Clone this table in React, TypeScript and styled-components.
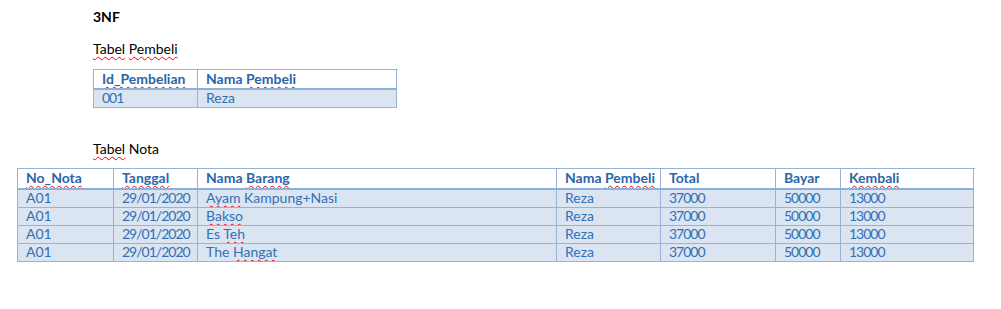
import React from 'react';
import styled, {createGlobalStyle} from "styled-components";

const GlobalStyle = createGlobalStyle`
  html, body {
    margin: 0;
    padding: 0;
    background: #ffffff;
  }
  body {
    font-family: Lato, "Open Sans", sans-serif;
    font-size: 14px;
    color: #000000;
  }
`

const StyledPage = styled.div`
  width: 1001px;
  height: 309px;
  padding: 8px 0 0 17px;
  box-sizing: border-box;
`
const StyledIndent = styled.div`
  margin-left: 76px;
`
const StyledTitle = styled.div`
  font-weight: bold;
  line-height: 18px;
  margin-bottom: 14px;
`
const StyledCaption = styled.div<{ $gap: number, $top?: number }>`
  line-height: 18px;
  margin-top: ${p => p.$top || 0}px;
  margin-bottom: ${p => p.$gap}px;
`
const StyledTable = styled.div<{ $cols: number[], $width: number }>`
  display: grid;
  grid-template-columns: ${p => p.$cols.map(c => `${c}px`).join(" ")};
  width: ${p => p.$width}px;
  border-left: 1px solid #95b3d7;
  border-top: 1px solid #95b3d7;
`
const StyledCell = styled.div<{ $head?: boolean, $height: number }>`
  box-sizing: border-box;
  height: ${p => p.$height}px;
  padding: 0 6px 0 8px;
  line-height: ${p => p.$head ? 18 : 16}px;
  white-space: nowrap;
  overflow: hidden;
  font-weight: ${p => p.$head ? "bold" : "normal"};
  color: ${p => p.$head ? "#2b66a8" : "#3270b5"};
  background: ${p => p.$head ? "#ffffff" : "#dbe5f1"};
  border-right: 1px solid #95b3d7;
  border-bottom: ${p => p.$head ? "2px solid #8db0da" : "1px solid #95b3d7"};
`
const Typo = styled.span`
  text-decoration: underline wavy #ff0000;
  text-decoration-thickness: 1.2px;
  text-underline-offset: 2px;
  text-decoration-skip-ink: none;
`
// Lato digits run wider than the Calibri ones in the picture
const Num = styled.span`
  letter-spacing: -1px;
`

const FLAGGED = ["Tabel", "Pembeli", "Id_Pembelian", "No_Nota", "Tanggal", "Barang", "Kembali", "Ayam", "Bakso", "Teh", "Hangat"]

// wraps words Word flags as misspelt
const spell = (text: string) => {
    if (/^[\d/]+$/.test(text)) return <Num>{text}</Num>
    return text.split(/(\s+|\+)/).map((w, i) =>
        FLAGGED.includes(w) ? <Typo key={i}>{w}</Typo> : <React.Fragment key={i}>{w}</React.Fragment>)
}

const DataTable = (
    {
        cols,
        head,
        rows,
        headHeight
    }: {
        cols: number[],
        head: string[],
        rows: string[][],
        headHeight: number
    }) => {
    const width = cols.reduce((a, b) => a + b, 0) + 1
    return (
        <StyledTable $cols={cols} $width={width}>
            {head.map((h, i) => <StyledCell key={"h" + i} $head $height={headHeight}>{spell(h)}</StyledCell>)}
            {rows.map((row, r) => row.map((c, i) =>
                <StyledCell key={r + "-" + i} $height={18}>{spell(c)}</StyledCell>))}
        </StyledTable>
    )
}

const notaRows = [
    ["A01", "29/01/2020", "Ayam Kampung+Nasi", "Reza", "37000", "50000", "13000"],
    ["A01", "29/01/2020", "Bakso", "Reza", "37000", "50000", "13000"],
    ["A01", "29/01/2020", "Es Teh", "Reza", "37000", "50000", "13000"],
    ["A01", "29/01/2020", "The Hangat", "Reza", "37000", "50000", "13000"],
]

function App() {
    return (
        <StyledPage>
            <GlobalStyle/>
            <StyledIndent>
                <StyledTitle>3NF</StyledTitle>
                <StyledCaption $gap={11}>{spell("Tabel Pembeli")}</StyledCaption>
                <DataTable
                    cols={[104, 199]}
                    head={["Id_Pembelian", "Nama Pembeli"]}
                    rows={[["001", "Reza"]]}
                    headHeight={20}
                />
                <StyledCaption $gap={10} $top={32}>{spell("Tabel Nota")}</StyledCaption>
            </StyledIndent>
            <DataTable
                cols={[96, 84, 359, 104, 115, 65, 133]}
                head={["No_Nota", "Tanggal", "Nama Barang", "Nama Pembeli", "Total", "Bayar", "Kembali"]}
                rows={notaRows}
                headHeight={21}
            />
        </StyledPage>
    );
}

export default App;
